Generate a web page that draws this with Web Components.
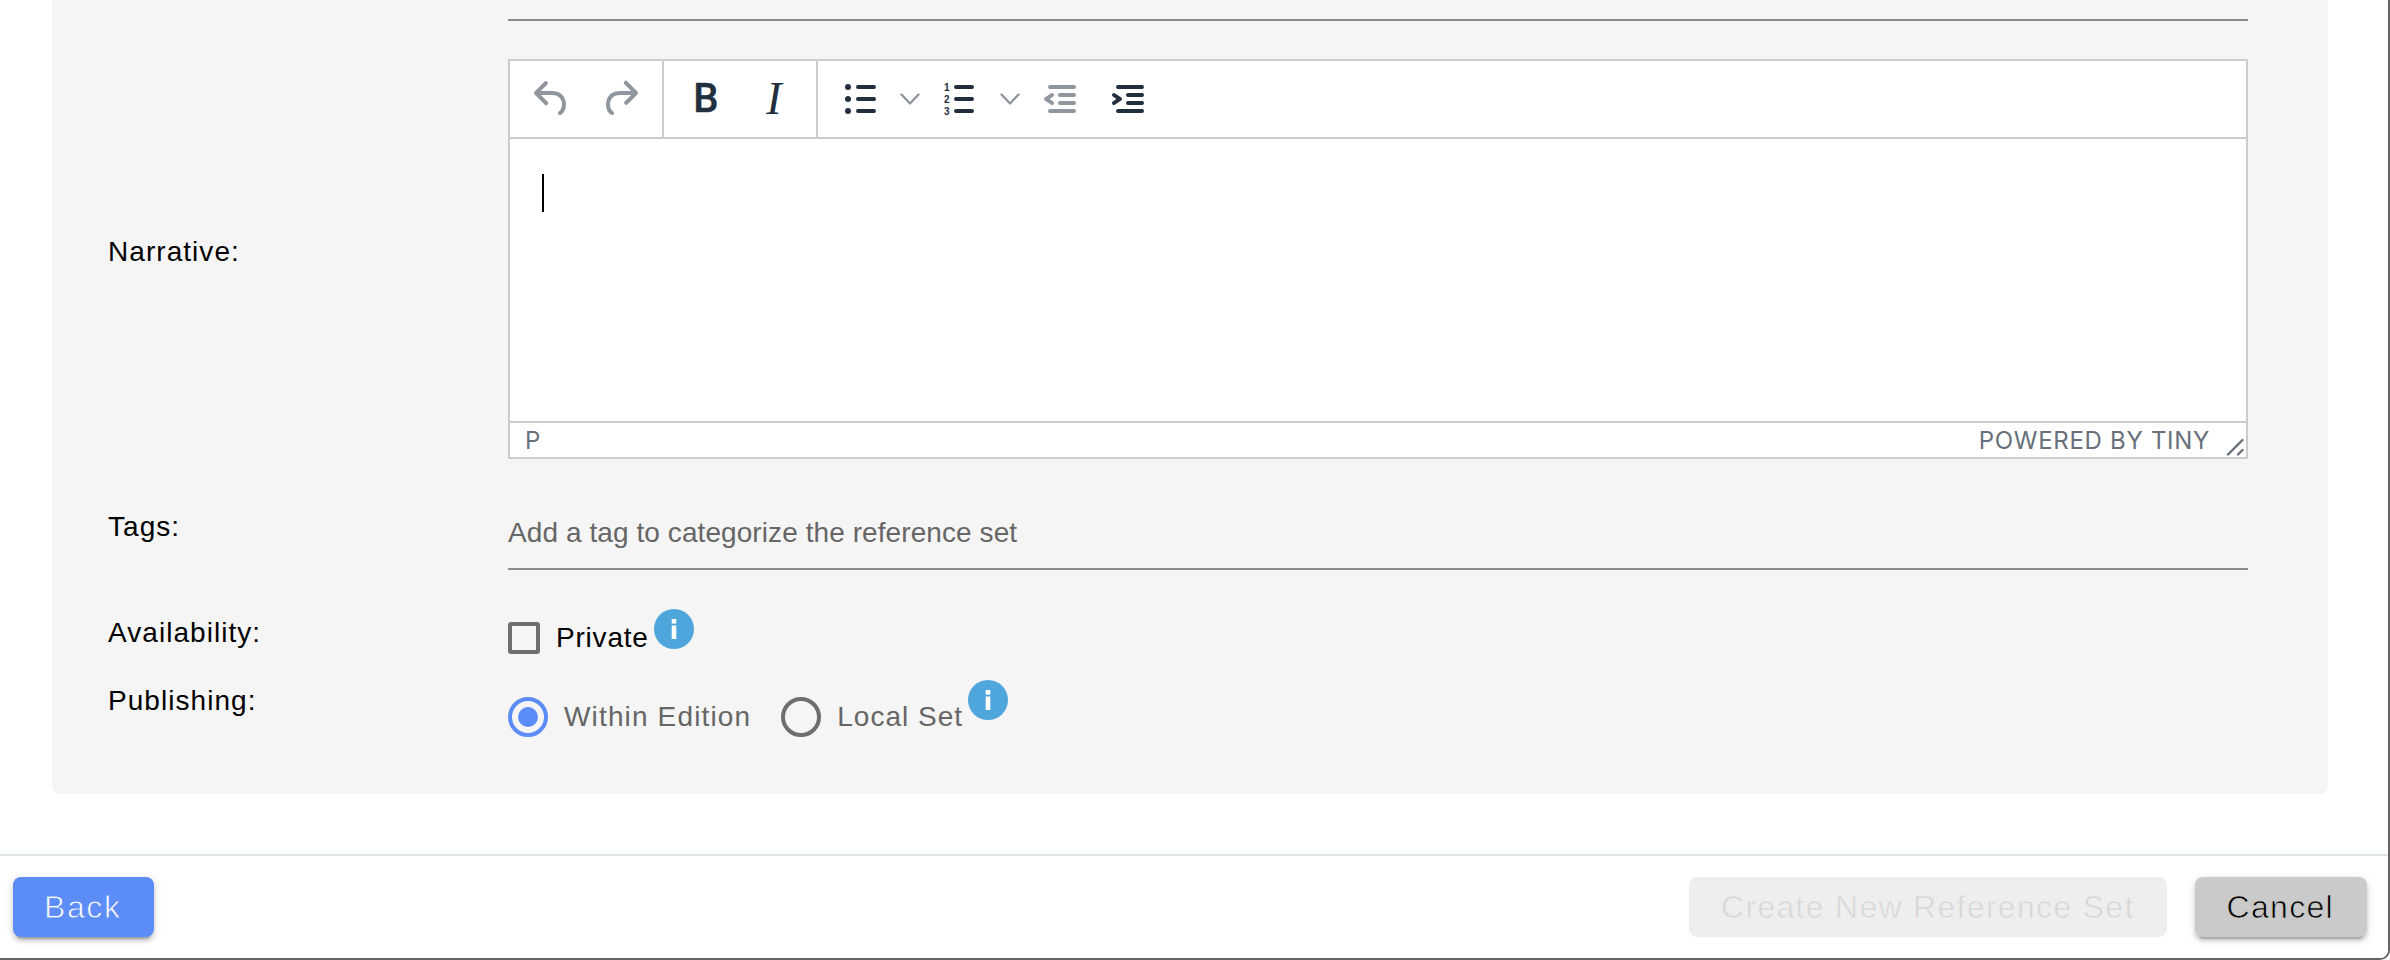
<!DOCTYPE html>
<html>
<head>
<meta charset="utf-8">
<title>Create New Reference Set</title>
<style>
  html, body { margin: 0; padding: 0; background: #fff; overflow: hidden; }
</style>
</head>
<body>
<ref-dialog>
  <ref-panel>
    <ref-rule></ref-rule>
    <form-row label="Narrative:" label-top="177" top="38">
      <tiny-editor></tiny-editor>
    </form-row>
    <form-row label="Tags:" label-top="52" top="0">
      <tag-input placeholder="Add a tag to categorize the reference set"></tag-input>
    </form-row>
    <form-row label="Availability:" label-top="8" top="39">
      <check-box label="Private"></check-box>
      <info-badge></info-badge>
    </form-row>
    <form-row label="Publishing:" label-top="5" top="26">
      <radio-option label="Within Edition" checked spacing="1.15" gap="30"></radio-option>
      <radio-option label="Local Set" spacing="1"></radio-option>
      <info-badge></info-badge>
    </form-row>
  </ref-panel>
  <ref-footer>
    <action-button slot="left" kind="primary">Back</action-button>
    <action-button slot="right" kind="disabled">Create New Reference Set</action-button>
    <action-button slot="right" kind="neutral">Cancel</action-button>
  </ref-footer>
</ref-dialog>

<script>
const ICONS = {
  undo: '<path d="M6.4 8H12c3.7 0 6.2 2 6.8 5.1.6 2.7-.4 5.6-2.3 6.8a1 1 0 0 1-1-1.8c1.1-.6 1.8-2.7 1.4-4.6-.5-2.1-2.1-3.5-4.9-3.5H6.4l3.3 3.3a1 1 0 1 1-1.4 1.4l-5-5a1 1 0 0 1 0-1.4l5-5a1 1 0 0 1 1.4 1.4L6.4 8z"/>',
  redo: '<path d="M17.6 10H12c-2.8 0-4.4 1.4-4.9 3.5-.4 2 .3 4 1.4 4.6a1 1 0 1 1-1 1.8c-2-1.2-2.9-4.1-2.3-6.8.6-3 3-5.1 6.8-5.1h5.6l-3.3-3.3a1 1 0 1 1 1.4-1.4l5 5a1 1 0 0 1 0 1.4l-5 5a1 1 0 0 1-1.4-1.4l3.3-3.3z"/>',
  bullets: '<path d="M11 5h8a1 1 0 0 1 0 2h-8a1 1 0 0 1 0-2zm0 6h8a1 1 0 0 1 0 2h-8a1 1 0 0 1 0-2zm0 6h8a1 1 0 0 1 0 2h-8a1 1 0 0 1 0-2z"/><circle cx="6" cy="6" r="1.5"/><circle cx="6" cy="12" r="1.5"/><circle cx="6" cy="18" r="1.5"/>',
  numbers: '<path d="M10 17h8a1 1 0 0 1 0 2h-8a1 1 0 0 1 0-2zm0-6h8a1 1 0 0 1 0 2h-8a1 1 0 0 1 0-2zm0-6h8a1 1 0 0 1 0 2h-8a1 1 0 1 1 0-2z"/>' +
    '<g font-family="Liberation Sans, sans-serif" font-weight="700" font-size="5"><text x="4" y="7.900">1</text><text x="4" y="14">2</text><text x="4" y="20">3</text></g>',
  outdent: '<path d="M7 5h12a1 1 0 0 1 0 2H7a1 1 0 1 1 0-2zm5 4h7a1 1 0 0 1 0 2h-7a1 1 0 0 1 0-2zm0 4h7a1 1 0 0 1 0 2h-7a1 1 0 0 1 0-2zm-5 4h12a1 1 0 0 1 0 2H7a1 1 0 0 1 0-2zm1.6-3.8a1 1 0 0 1-1.2 1.6l-3-2a1 1 0 0 1 0-1.6l3-2a1 1 0 0 1 1.2 1.6L6.8 12l1.8 1.2z"/>',
  indent: '<path d="M7 5h12a1 1 0 0 1 0 2H7a1 1 0 1 1 0-2zm5 4h7a1 1 0 0 1 0 2h-7a1 1 0 0 1 0-2zm0 4h7a1 1 0 0 1 0 2h-7a1 1 0 0 1 0-2zm-5 4h12a1 1 0 0 1 0 2H7a1 1 0 0 1 0-2zm-2.6-3.8L6.2 12l-1.8-1.2a1 1 0 0 1 1.2-1.6l3 2a1 1 0 0 1 0 1.6l-3 2a1 1 0 1 1-1.2-1.6z"/>'
};

class RefDialog extends HTMLElement {
  connectedCallback() {
    this.attachShadow({ mode: 'open' });
    this.shadowRoot.innerHTML = `
      <style>
        :host {
          display: flex;
          flex-direction: column;
          box-sizing: border-box;
          width: 2390px;
          height: 960px;
          overflow: hidden;
          background: #fff;
          border-right: 2px solid #636363;
          border-bottom: 2px solid #636363;
          border-bottom-right-radius: 10px;
          font-family: "Liberation Sans", Arial, sans-serif;
          font-size: 28px;
          line-height: 32px;
        }
      </style>
      <slot></slot>`;
  }
}

class RefPanel extends HTMLElement {
  connectedCallback() {
    this.attachShadow({ mode: 'open' });
    this.shadowRoot.innerHTML = `
      <style>
        :host {
          display: block;
          box-sizing: border-box;
          height: 794px;
          margin: 0 60px 60px 52px;
          padding: 19px 80px 0 56px;
          background: #f5f5f5;
          border-bottom-left-radius: 8px;
          border-bottom-right-radius: 8px;
        }
      </style>
      <slot></slot>`;
  }
}

class RefRule extends HTMLElement {
  connectedCallback() {
    this.attachShadow({ mode: 'open' });
    this.shadowRoot.innerHTML = `
      <style>
        :host { display: block; height: 2px; margin-left: 400px; background: #8c8c8c; }
      </style>`;
  }
}

class FormRow extends HTMLElement {
  connectedCallback() {
    const top = this.getAttribute('top') || 0;
    const labelTop = this.getAttribute('label-top') || 0;
    this.attachShadow({ mode: 'open' });
    this.shadowRoot.innerHTML = `
      <style>
        :host { display: grid; grid-template-columns: 400px 1fr; margin-top: ${top}px; }
        .label { margin-top: ${labelTop}px; color: #000; letter-spacing: 1.05px; }
        .field { display: flex; align-items: flex-start; min-width: 0; }
      </style>
      <div class="label">${this.getAttribute('label')}</div>
      <div class="field"><slot></slot></div>`;
  }
}

class TinyEditor extends HTMLElement {
  connectedCallback() {
    this.attachShadow({ mode: 'open' });
    this.shadowRoot.innerHTML = `
      <style>
        :host {
          display: flex;
          flex-direction: column;
          flex: 1;
          box-sizing: border-box;
          height: 400px;
          position: relative;
          background: #fff;
          border: 2px solid #ccc;
        }
        .toolbar { display: flex; height: 76px; border-bottom: 2px solid #ccc; }
        .group { display: flex; padding: 0 8px; border-right: 2px solid #ccc; }
        .group:last-child { border-right: 0; }
        .content { flex: 1; padding: 35px 32px 0; }
        .caret { width: 2px; height: 38px; background: #000; }
        .status {
          display: flex;
          justify-content: space-between;
          box-sizing: border-box;
          height: 36px;
          padding: 1px 36px 0 15px;
          border-top: 2px solid #ccc;
          font-family: Inter, "Liberation Sans", sans-serif;
          font-size: 24px;
          line-height: 34px;
          color: #68707c;
        }
        .brand { letter-spacing: 0.7px; }
        .grip { position: absolute; right: 2px; bottom: 1px; width: 18px; height: 18px; }
      </style>
      <div class="toolbar">
        <div class="group">
          <tool-btn icon="undo" disabled></tool-btn>
          <tool-btn icon="redo" disabled></tool-btn>
        </div>
        <div class="group">
          <tool-btn letter="B"></tool-btn>
          <tool-btn letter="I"></tool-btn>
        </div>
        <div class="group">
          <tool-btn icon="bullets"></tool-btn>
          <tool-caret></tool-caret>
          <tool-btn icon="numbers"></tool-btn>
          <tool-caret></tool-caret>
          <tool-btn icon="outdent" disabled></tool-btn>
          <tool-btn icon="indent"></tool-btn>
        </div>
      </div>
      <div class="content"><div class="caret"></div></div>
      <div class="status"><span>P</span><span class="brand">POWERED BY TINY</span></div>
      <svg class="grip" viewBox="0 0 18 18" fill="none" stroke="#68707c" stroke-width="2.4" stroke-linecap="round">
        <path d="M2 16.5 16.5 2M12 16.5l4.5-4.5"/>
      </svg>`;
  }
}

class ToolBtn extends HTMLElement {
  connectedCallback() {
    const letter = this.getAttribute('letter');
    const face = letter
      ? `<span class="letter ${letter === 'I' ? 'italic' : 'bold'}">${letter}</span>`
      : `<svg viewBox="0 0 24 24" width="48" height="48" fill="currentColor">${ICONS[this.getAttribute('icon')]}</svg>`;
    this.attachShadow({ mode: 'open' });
    this.shadowRoot.innerHTML = `
      <style>
        :host {
          display: flex;
          align-items: center;
          justify-content: center;
          width: 68px;
          height: 76px;
          color: #222f3e;
        }
        :host([disabled]) { color: #90969e; }
        svg { display: block; }
        .letter { display: block; text-align: center; }
        .bold { font: 500 40px/48px Roboto, "Liberation Sans", sans-serif; -webkit-text-stroke: 0.4px #222f3e; }
        .italic { font: italic 400 46px/48px "Liberation Serif", serif; }
      </style>
      ${face}`;
  }
}

class ToolCaret extends HTMLElement {
  connectedCallback() {
    this.attachShadow({ mode: 'open' });
    this.shadowRoot.innerHTML = `
      <style>
        :host { display: flex; align-items: center; justify-content: center; width: 32px; height: 76px; }
      </style>
      <svg width="20" height="12" viewBox="0 0 20 12" fill="none" stroke="#90969e" stroke-width="2.4" stroke-linecap="round" stroke-linejoin="round">
        <path d="M1.5 1.5 10 10.5l8.500-9"/>
      </svg>`;
  }
}

class TagInput extends HTMLElement {
  connectedCallback() {
    this.attachShadow({ mode: 'open' });
    this.shadowRoot.innerHTML = `
      <style>
        :host {
          display: block;
          flex: 1;
          margin-top: 58px;
          padding-bottom: 19px;
          border-bottom: 2px solid #8c8c8c;
          color: #666;
          letter-spacing: 0.08px;
        }
      </style>
      ${this.getAttribute('placeholder')}`;
  }
}

class CheckBox extends HTMLElement {
  connectedCallback() {
    this.attachShadow({ mode: 'open' });
    this.shadowRoot.innerHTML = `
      <style>
        :host { display: flex; margin-top: 13px; color: #000; letter-spacing: 0.8px; }
        .box {
          box-sizing: border-box;
          width: 32px;
          height: 32px;
          margin-right: 16px;
          border: 4px solid #6e6e6e;
          border-radius: 3px;
        }
      </style>
      <div class="box"></div><span>${this.getAttribute('label')}</span>`;
  }
}

class RadioOption extends HTMLElement {
  connectedCallback() {
    const spacing = this.getAttribute('spacing') || 1;
    const gap = this.getAttribute('gap') || 0;
    this.attachShadow({ mode: 'open' });
    this.shadowRoot.innerHTML = `
      <style>
        :host {
          display: flex;
          margin: 17px ${gap}px 0 0;
          color: #666;
          letter-spacing: ${spacing}px;
        }
        .dot {
          display: flex;
          align-items: center;
          justify-content: center;
          box-sizing: border-box;
          width: 40px;
          height: 40px;
          margin-right: 16px;
          border: 4px solid #6e6e6e;
          border-radius: 50%;
        }
        :host([checked]) .dot { border-color: #5b8cf8; }
        :host([checked]) .dot::after {
          content: "";
          width: 20px;
          height: 20px;
          border-radius: 50%;
          background: #5b8cf8;
        }
        span { margin-top: 4px; }
      </style>
      <div class="dot"></div><span>${this.getAttribute('label')}</span>`;
  }
}

class InfoBadge extends HTMLElement {
  connectedCallback() {
    this.attachShadow({ mode: 'open' });
    this.shadowRoot.innerHTML = `
      <style>
        :host { display: block; width: 40px; height: 40px; margin-left: 5px; }
        svg { display: block; }
      </style>
      <svg width="40" height="40" viewBox="0 0 40 40">
        <circle cx="20" cy="20" r="20" fill="#4fa6dc"/>
        <rect x="17.700" y="10" width="4.600" height="4.600" fill="#fff"/>
        <rect x="17.700" y="16.500" width="4.600" height="13.500" fill="#fff"/>
      </svg>`;
  }
}

class RefFooter extends HTMLElement {
  connectedCallback() {
    this.attachShadow({ mode: 'open' });
    this.shadowRoot.innerHTML = `
      <style>
        :host {
          display: flex;
          justify-content: space-between;
          box-sizing: border-box;
          height: 104px;
          padding: 21px 21px 0 13px;
          background: #fff;
          border-top: 2px solid #dfe4e8;
        }
        .side { display: flex; gap: 28px; }
      </style>
      <div class="side"><slot name="left"></slot></div>
      <div class="side"><slot name="right"></slot></div>`;
  }
}

class ActionButton extends HTMLElement {
  connectedCallback() {
    this.attachShadow({ mode: 'open' });
    this.shadowRoot.innerHTML = `
      <style>
        :host {
          display: flex;
          align-items: center;
          box-sizing: border-box;
          height: 60px;
          padding: 0 32px;
          border-radius: 8px;
          font-size: 32px;
          letter-spacing: 1.3px;
          white-space: nowrap;
        }
        :host([kind="primary"]), :host([kind="neutral"]) {
          box-shadow: 0 6px 2px -4px rgba(0,0,0,.2), 0 4px 4px 0 rgba(0,0,0,.14), 0 2px 10px 0 rgba(0,0,0,.12);
        }
        :host([kind="primary"]) { width: 141px; padding: 0 0 0 31px; letter-spacing: 1.6px; background: #5b8cf8; color: #fff; -webkit-text-stroke: 0.8px #5b8cf8; }
        :host([kind="disabled"]) { background: #eee; color: #d6d6d6; -webkit-text-stroke: 0.7px #eee; }
        :host([kind="neutral"]) { padding: 0 33px 0 32px; background: #cacaca; color: #000; -webkit-text-stroke: 0.7px #cacaca; }
      </style>
      <slot></slot>`;
  }
}

customElements.define('ref-dialog', RefDialog);
customElements.define('ref-panel', RefPanel);
customElements.define('ref-rule', RefRule);
customElements.define('form-row', FormRow);
customElements.define('tiny-editor', TinyEditor);
customElements.define('tool-btn', ToolBtn);
customElements.define('tool-caret', ToolCaret);
customElements.define('tag-input', TagInput);
customElements.define('check-box', CheckBox);
customElements.define('radio-option', RadioOption);
customElements.define('info-badge', InfoBadge);
customElements.define('ref-footer', RefFooter);
customElements.define('action-button', ActionButton);
</script>
</body>
</html>
